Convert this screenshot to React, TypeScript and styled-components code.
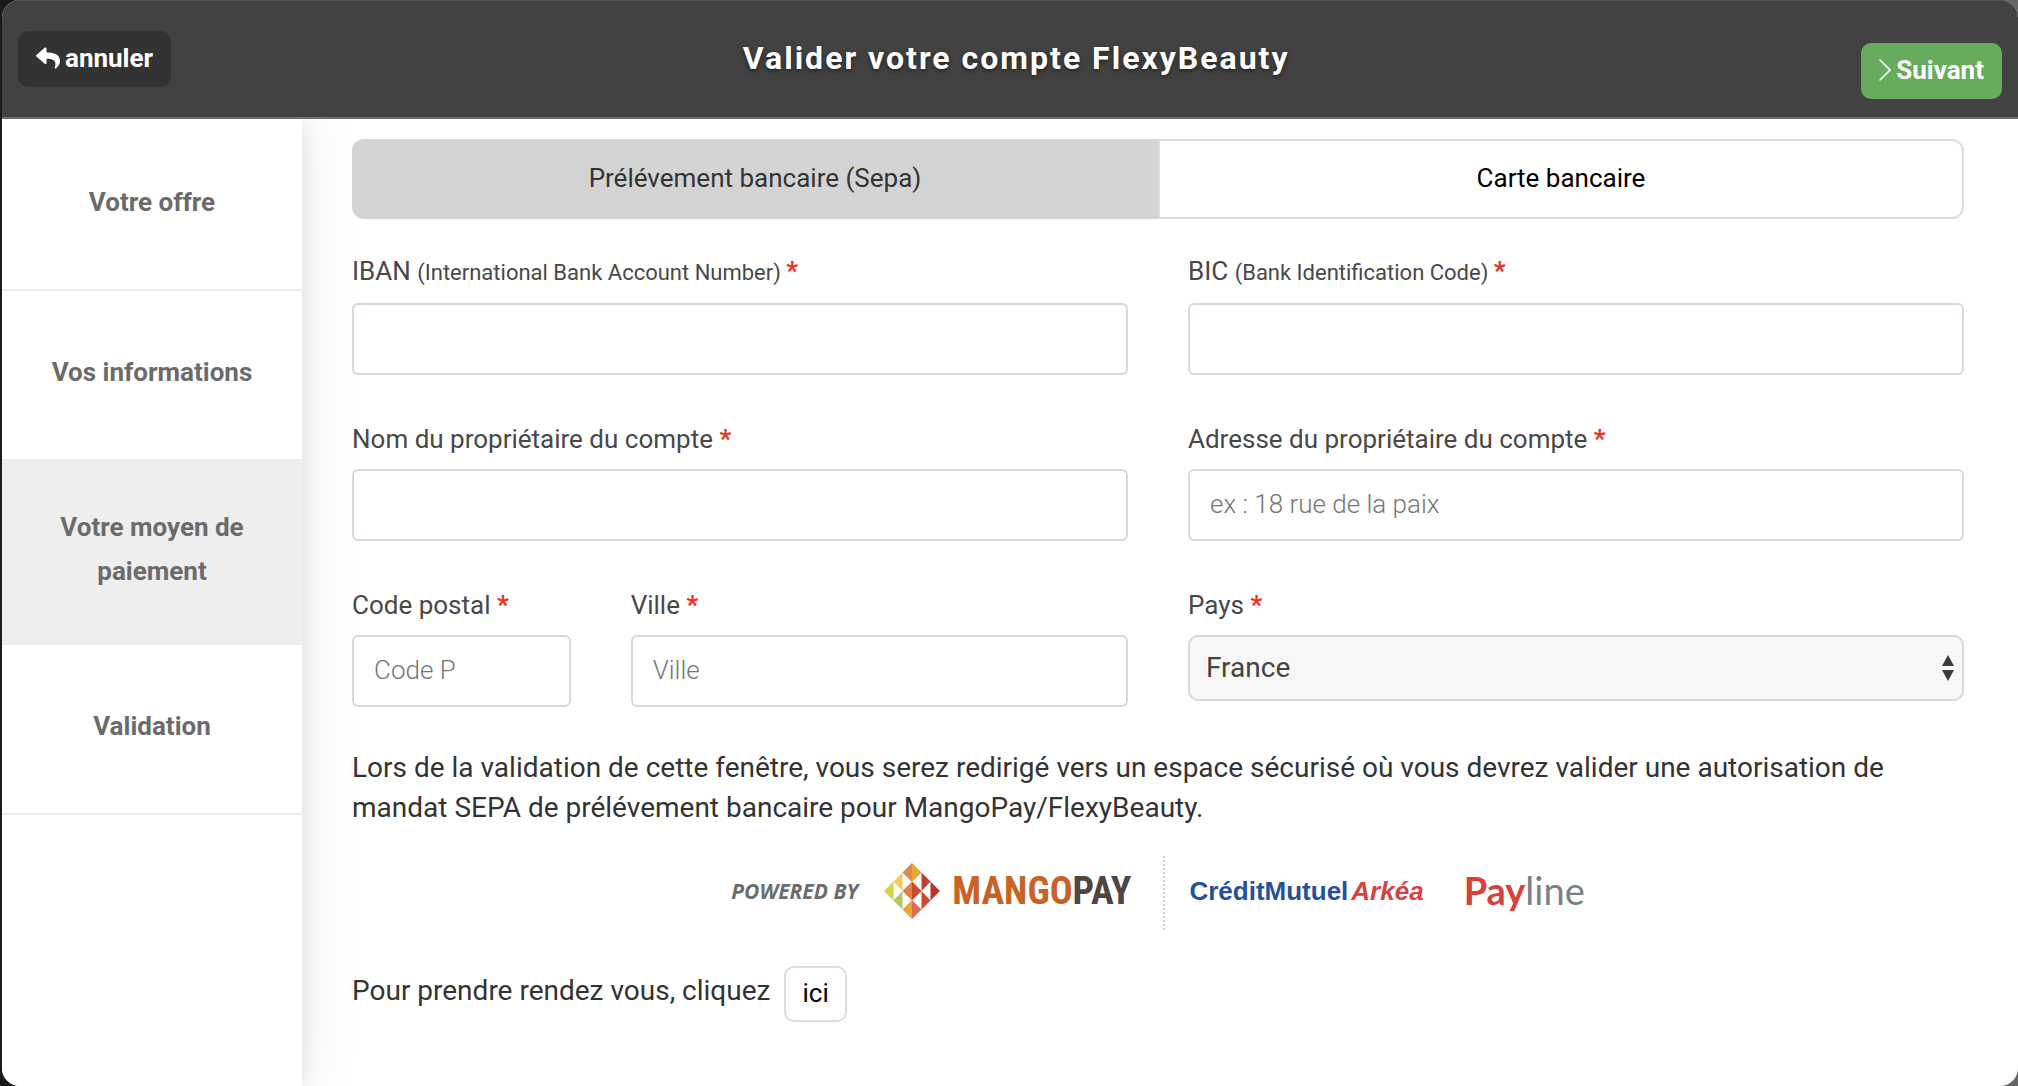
import React from 'react';
import styled, { createGlobalStyle } from 'styled-components';
import { FaReply } from 'react-icons/fa';

const GlobalStyle = createGlobalStyle`
  *, *::before, *::after { box-sizing: border-box; }
  body {
    margin: 0;
    background: linear-gradient(to right, #1a1a1a 50%, #666 50%);
    font-family: Roboto, "Liberation Sans", sans-serif;
    font-size: 26px;
    color: #333;
  }
  button, input, select { font-family: inherit; font-size: inherit; }
`;

const Window = styled.div`
  display: flex;
  flex-direction: column;
  min-height: 100vh;
  margin-left: 2px;
  overflow: hidden;
  border-radius: 18px;
  background: #fff;
`;

const Header = styled.header`
  position: relative;
  display: flex;
  align-items: flex-start;
  padding: 30px 16px;
  height: 119px;
  background: #424242;
  border-top: 1px solid #555;
  border-bottom: 2px solid #6f6d6d;
`;

const Title = styled.h1`
  flex: 1;
  margin: 0;
  text-align: center;
  font-size: 32px;
  line-height: 54px;
  font-weight: 700;
  letter-spacing: 2px;
  color: #fff;
  text-shadow: 0 2px 4px rgba(0, 0, 0, 0.5);
`;

const HeaderButton = styled.button<{ $primary?: boolean }>`
  display: flex;
  align-items: center;
  gap: 5px;
  height: 56px;
  padding: 0 18px 2px;
  margin-top: ${(p) => (p.$primary ? '12px' : '0')};
  border: 0;
  border-radius: 10px;
  background: ${(p) => (p.$primary ? '#67ac5c' : '#333')};
  color: #fff;
  font-weight: 700;
  cursor: pointer;
`;

const Body = styled.div`
  display: flex;
  flex: 1;
`;

const Sidebar = styled.nav`
  flex: 0 0 300px;
  padding-top: 2px;
  background: #fff;
  box-shadow: 0 0 60px rgba(0, 0, 0, 0.08), 0 4px 20px rgba(0, 0, 0, 0.1);
`;

const Step = styled.a<{ $active?: boolean }>`
  display: flex;
  align-items: center;
  justify-content: center;
  min-height: 170px;
  padding: 44px 40px 50px;
  border-bottom: 2px solid #eee;
  background: ${(p) => (p.$active ? '#eee' : '#fff')};
  color: #6b6b6b;
  font-weight: 700;
  line-height: 44px;
  text-align: center;
  text-decoration: none;
`;

const Content = styled.main`
  flex: 1;
  padding: 20px 54px 40px 50px;
`;

const Tabs = styled.div`
  display: flex;
`;

const Tab = styled.button<{ $active?: boolean }>`
  flex: 1;
  height: 80px;
  padding: 0 0 2px;
  border: 2px solid ${(p) => (p.$active ? '#d3d3d3' : '#ddd')};
  border-radius: ${(p) => (p.$active ? '12px 0 0 12px' : '0 12px 12px 0')};
  background: ${(p) => (p.$active ? '#d3d3d3' : '#fff')};
  color: ${(p) => (p.$active ? '#333' : '#000')};
  cursor: pointer;
`;

const Form = styled.form`
  display: grid;
  grid-template-columns: repeat(6, 1fr);
  align-items: start;
  gap: 46px 60px;
  margin-top: 34px;
`;

const Field = styled.div<{ $span: number }>`
  display: flex;
  flex-direction: column;
  grid-column: span ${(p) => p.$span};
  min-width: 0;
`;

const Label = styled.label`
  margin-bottom: 12px;
  line-height: 36px;
  color: #484848;
`;

const Hint = styled.span`
  font-size: 22px;
`;

const Required = styled.span`
  font-weight: 700;
  color: #ee3124;
`;

const Input = styled.input`
  width: 100%;
  height: 72px;
  padding: 0 20px 2px;
  border: 2px solid #d5d8e2;
  border-radius: 6px;
  background: #fff;
  color: #444;
  &::placeholder {
    color: #757575;
    font-weight: 300;
    opacity: 1;
  }
`;

const SelectBox = styled.div`
  position: relative;
`;

const Select = styled.select`
  appearance: none;
  width: 100%;
  height: 66px;
  padding: 0 40px 2px 16px;
  border: 2px solid #d5d8e2;
  border-radius: 10px;
  background: #f7f7f7;
  color: #444;
  font-size: 28px;
`;

const SelectArrows = styled.svg`
  position: absolute;
  right: 10px;
  top: 20px;
  pointer-events: none;
`;

const Notice = styled.p`
  margin: 41px 0 0;
  font-size: 28px;
  line-height: 40px;
`;

const Partners = styled.div`
  display: flex;
  align-items: center;
  justify-content: center;
  height: 74px;
  margin-top: 28px;
  & > * {
    margin-bottom: 4px;
  }
`;

const PoweredBy = styled.span`
  margin-right: 26px;
  font-family: "Open Sans", sans-serif;
  font-size: 21px;
  font-weight: 700;
  font-style: italic;
  color: #6a6c70;
`;

const MangoPay = styled.span`
  margin-left: 12px;
  font-family: "Roboto Condensed", Roboto, sans-serif;
  font-size: 38px;
  font-weight: 700;
  color: #c96226;
`;

const Pay = styled.span`
  color: #50453f;
`;

const Divider = styled.span`
  height: 74px;
  margin: 0 24px 0 32px;
  border-left: 2px dotted #d3d3d0;
`;

const CreditMutuel = styled.span`
  margin-right: 40px;
  font-family: "Liberation Sans", sans-serif;
  font-size: 26px;
  font-weight: 700;
  color: #24509f;
`;

const Arkea = styled.em`
  margin-left: 3px;
  color: #d5433f;
`;

const Payline = styled.span`
  padding-bottom: 2px;
  font-family: Lato, sans-serif;
  font-size: 38px;
  font-weight: 400;
  color: #7b8085;
`;

const PaylineStart = styled.span`
  font-weight: 700;
  color: #d8403c;
`;

const Booking = styled.div`
  display: flex;
  align-items: center;
  gap: 14px;
  margin-top: 36px;
`;

const BookingText = styled.span`
  padding-bottom: 8px;
  font-size: 28px;
`;

const SmallButton = styled.button`
  height: 56px;
  padding: 0 16px 2px;
  border: 2px solid #ddd;
  border-radius: 10px;
  background: #fff;
  color: #000;
  cursor: pointer;
`;

const ChevronIcon = () => (
  <svg width="12" height="22" viewBox="0 0 12 22" fill="none" stroke="#fff" strokeWidth="1.6" strokeLinecap="round" aria-hidden="true">
    <path d="M1 1L11 11L1 21" />
  </svg>
);

const MangoIcon = () => (
  <svg width="56" height="56" viewBox="0 0 56 56" aria-hidden="true">
    <path d="M28 0L18.500 9.500L28 19Z" fill="#df8b50" />
    <path d="M28 0L37.500 9.500L28 19Z" fill="#e8a63a" />
    <path d="M18.500 9.500V28L9.500 18.500Z" fill="#efcb5c" />
    <path d="M37.500 9.500V28L46.500 18.500Z" fill="#c43c30" />
    <path d="M9.500 18.500V37.500L0 28Z" fill="#d2d83c" />
    <path d="M46.500 18.500V37.500L56 28Z" fill="#b8352c" />
    <path d="M28 18.500V37.500L18.500 28Z" fill="#df8148" />
    <path d="M28 18.500V37.500L37.500 28Z" fill="#cb4a2c" />
    <path d="M18.500 28V46.500L9.500 37.500Z" fill="#b5c662" />
    <path d="M37.500 28V46.500L46.500 37.500Z" fill="#cb4a2c" />
    <path d="M28 37V56L18.500 46.500Z" fill="#e8a63a" />
    <path d="M28 37V56L37.500 46.500Z" fill="#dd6c50" />
  </svg>
);

interface TextFieldProps {
  id: string;
  label: string;
  hint?: string;
  placeholder?: string;
  span: number;
}

const FieldLabel = ({ id, label, hint }: { id: string; label: string; hint?: string }) => (
  <Label htmlFor={id}>
    {label} {hint && <Hint>({hint}) </Hint>}
    <Required>*</Required>
  </Label>
);

const TextField = ({ id, label, hint, placeholder, span }: TextFieldProps) => (
  <Field $span={span}>
    <FieldLabel id={id} label={label} hint={hint} />
    <Input id={id} type="text" placeholder={placeholder} />
  </Field>
);

const steps = ['Votre offre', 'Vos informations', 'Votre moyen de paiement', 'Validation'];
const currentStep = 2;

export default function App() {
  return (
    <>
      <GlobalStyle />
      <Window>
        <Header>
          <HeaderButton type="button">
            <FaReply size={24} aria-hidden="true" />
            annuler
          </HeaderButton>
          <Title>Valider votre compte FlexyBeauty</Title>
          <HeaderButton type="button" $primary>
            <ChevronIcon />
            Suivant
          </HeaderButton>
        </Header>
        <Body>
          <Sidebar>
            {steps.map((step, i) => (
              <Step key={step} href="#" $active={i === currentStep}>
                {step}
              </Step>
            ))}
          </Sidebar>
          <Content>
            <Tabs>
              <Tab type="button" $active>Prélévement bancaire (Sepa)</Tab>
              <Tab type="button">Carte bancaire</Tab>
            </Tabs>
            <Form>
              <TextField id="iban" label="IBAN" hint="International Bank Account Number" span={3} />
              <TextField id="bic" label="BIC" hint="Bank Identification Code" span={3} />
              <TextField id="owner" label="Nom du propriétaire du compte" span={3} />
              <TextField id="address" label="Adresse du propriétaire du compte" placeholder="ex : 18 rue de la paix" span={3} />
              <TextField id="zip" label="Code postal" placeholder="Code P" span={1} />
              <TextField id="city" label="Ville" placeholder="Ville" span={2} />
              <Field $span={3}>
                <FieldLabel id="country" label="Pays" />
                <SelectBox>
                  <Select id="country" defaultValue="France">
                    <option>France</option>
                  </Select>
                  <SelectArrows width="12" height="26" viewBox="0 0 12 26" fill="#3c3c3c" aria-hidden="true">
                    <path d="M6 0L12 11H0Z" />
                    <path d="M6 26L0 15H12Z" />
                  </SelectArrows>
                </SelectBox>
              </Field>
            </Form>
            <Notice>
              Lors de la validation de cette fenêtre, vous serez redirigé vers un espace sécurisé où vous devrez valider une
              autorisation de mandat SEPA de prélévement bancaire pour MangoPay/FlexyBeauty.
            </Notice>
            <Partners>
              <PoweredBy>POWERED BY</PoweredBy>
              <MangoIcon />
              <MangoPay>MANGO<Pay>PAY</Pay></MangoPay>
              <Divider />
              <CreditMutuel>CréditMutuel<Arkea>Arkéa</Arkea></CreditMutuel>
              <Payline><PaylineStart>Pay</PaylineStart>line</Payline>
            </Partners>
            <Booking>
              <BookingText>Pour prendre rendez vous, cliquez</BookingText>
              <SmallButton type="button">ici</SmallButton>
            </Booking>
          </Content>
        </Body>
      </Window>
    </>
  );
}
